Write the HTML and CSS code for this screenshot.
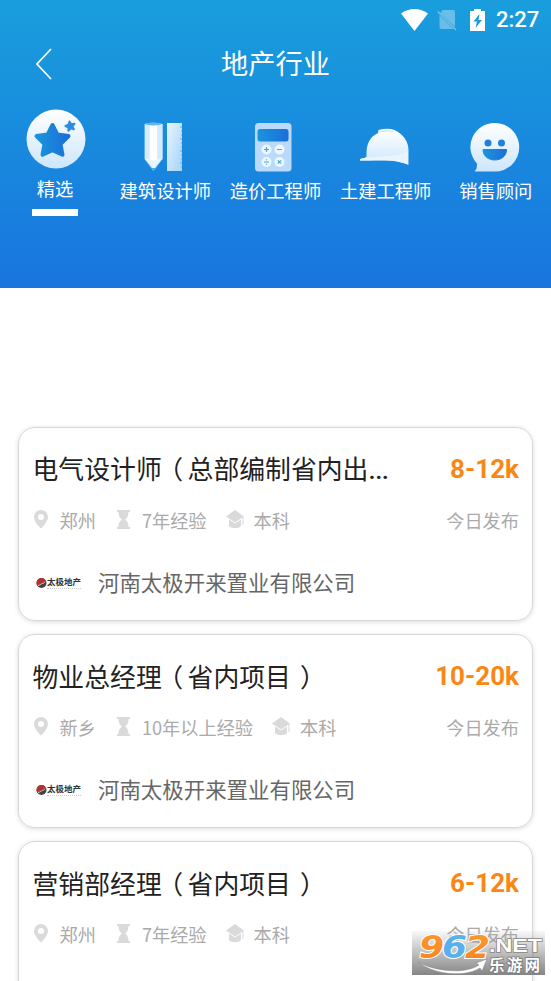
FILE: index.html
```html
<!DOCTYPE html>
<html lang="zh-CN">
<head>
<meta charset="utf-8">
<title>地产行业</title>
<link rel="stylesheet" href="styles.css">
</head>
<body>
<svg class="defs" width="0" height="0" aria-hidden="true">
  <defs>
    <linearGradient id="pale" x1="0" y1="0" x2="0" y2="1"><stop offset="0" stop-color="#fff"/><stop offset="1" stop-color="#cde6fc"/></linearGradient>
    <linearGradient id="blue" x1="0" y1="0" x2="1" y2="0"><stop offset="0" stop-color="#1a94dc"/><stop offset="1" stop-color="#1b6fd9"/></linearGradient>
    <linearGradient id="ruler" x1="0" y1="0" x2="1" y2="1"><stop offset="0" stop-color="#e8f5fe"/><stop offset="1" stop-color="#a5d3f7"/></linearGradient>
    <linearGradient id="orange" x1="0" y1="0" x2="0" y2="1"><stop offset="0" stop-color="#ff9a2e"/><stop offset="1" stop-color="#f58220"/></linearGradient>
  </defs>
  <symbol id="pin" viewBox="0 0 14 19"><path fill-rule="evenodd" d="M7 0a7 7 0 0 0-7 7c0 5 7 11.500 7 11.500S14 12 14 7a7 7 0 0 0-7-7Zm0 4a3 3 0 1 1 0 6 3 3 0 0 1 0-6Z"/></symbol>
  <symbol id="glass" viewBox="0 0 13 19"><path d="M0 0h13v2H0zM0 17h13v2H0zM1.500 1.500h10c0 5-1.500 6.500-3.500 8 2 1.500 3.500 3 3.500 8h-10c0-5 1.500-6.500 3.500-8-2-1.500-3.500-3-3.500-8Z"/></symbol>
  <symbol id="cap" viewBox="0 0 19 19"><path d="M9 0 18 6.500 9 12.500 0 6.500ZM3 9.500l6 4 6-4v6.500c-2 3-10 3-12 0ZM16.500 7h1v8h-1z"/></symbol>
  <symbol id="taiji" viewBox="0 0 11 12"><circle cx="5.500" cy="6" r="5" fill="#444"/><path fill="#c12c2c" d="M5.500 1a5 5 0 0 0-4.800 6.200C2 10 3.500 7 5.500 6.500S9 5 9 2.500A5 5 0 0 0 5.500 1Z"/><circle cx="4" cy="4" r="1" fill="#555"/><path d="M2 8.500c2 0 3-1.800 4.500-2s2-1 2.500-2" fill="none" stroke="#eee" stroke-width=".8"/></symbol>
</svg>

<header class="hero">
  <div class="status">
    <svg class="wifi" viewBox="0 0 27 22"><path d="M0 4.500C8-1.500 19-1.500 27 4.500L13.500 22Z"/></svg>
    <svg class="sim" viewBox="0 0 20 22"><path fill-opacity=".35" d="M5.500 1H16q2 0 2 2v15L3.500 4ZM2.500 6 16.500 20H4.500q-2 0-2-2Z"/><path d="M.8 2.500 19 21" stroke="#fff" stroke-opacity=".4" stroke-width="1.500"/></svg>
    <svg class="battery" viewBox="0 0 15 22"><path fill-rule="evenodd" d="M4 0h7v2h4v20H0V2h4ZM9.500 5 3.500 12.500H7L5.500 19l6.500-8H8.500Z"/></svg>
    <span class="clock">2:27</span>
  </div>
  <div class="navbar">
    <svg class="back" viewBox="0 0 16 32"><path d="M15 1 1 16l14 15" fill="none" stroke="#fff" stroke-width="1.700"/></svg>
    <h1>地产行业</h1>
  </div>
  <nav class="tabs">
    <a class="tab active">
      <svg class="star" viewBox="0 0 60 60"><circle cx="30" cy="30" r="29.500" fill="url(#pale)"/><path d="m26.500 16 4.800 9.500 11.200 1.600-8 8 2 10.700-10-4.500-10 4.500 2-10.700-8-8 11.200-1.600Z" fill="url(#blue)" stroke="url(#blue)" stroke-width="4" stroke-linejoin="round"/><path d="m43.500 12.500 1.700 2.700 3.200-.4-2 2.600 1.500 2.900-3.200-1-2.300 2.400v-3.300l-3-1.400 3.100-1.300Z" fill="#2b8ee3" stroke="#2b8ee3" stroke-width="2" stroke-linejoin="round"/></svg>
      <span>精选</span>
    </a>
    <a class="tab">
      <svg class="icon" viewBox="0 0 50 50"><path d="M5.500 2Q14-.5 23.500 2v35l-9 12-9-12Z" fill="#aed8f8"/><path d="M6 2h4.500v37L6 37ZM19 2h4.500v35L19 39Z" fill="#d4ebfc"/><path d="M10.500 2.500h8V39l-4 8-4-8Z" fill="#fff"/><path d="m6 37 4.500 0 4 2 4-2 4.500 0-8.500 10Z" fill="#e5f4fe"/><ellipse cx="14.500" cy="2" rx="8" ry="1.500" fill="#61b6ed"/><path d="m13 46 1.500 3 1.500-3Z" fill="#2ba5cf"/><path d="M28 1h15v48H28Z" fill="url(#ruler)"/><path d="M41 5h2m-1 4h1m-1 4h1m-2 4h2m-1 4h1m-1 4h1m-2 4h2m-1 4h1m-1 4h1m-2 4h2m-1 4h1" stroke="#59acea"/></svg>
      <span>建筑设计师</span>
    </a>
    <a class="tab">
      <svg class="icon" viewBox="0 0 50 50"><rect x="6" y="1" width="36.500" height="48.500" rx="3.500" fill="#b9dafa"/><rect x="8.500" y="7" width="31" height="12.500" rx="2.500" fill="url(#blue)"/><g fill="#edf7ff"><circle cx="17.500" cy="27.500" r="5"/><circle cx="30.500" cy="27.500" r="5"/><circle cx="17.500" cy="40" r="5"/><circle cx="30.500" cy="40" r="5"/></g><path d="M15 27.500h5M17.500 25v5M28 27.500h5M15 40h5M17.500 37.300v1M17.500 41.700v1m11.300-4.400 3.400 3.400m0-3.400-3.400 3.400" fill="none" stroke="#4aa5dc" stroke-width="1.200"/></svg>
      <span>造价工程师</span>
    </a>
    <a class="tab">
      <svg class="icon" viewBox="0 0 50 50"><path d="M0 38.500v-1.500q4-.5 6.500-2c-.5-13 3-20 11.500-24l.5-3q9-2.500 16 0c9 4 14 12 14 20v15c-7-4-18-5-27-4.500Z" fill="url(#pale)"/><path d="M6.500 35.500c14-1 30-1 41.500-6v13c-9-4-24-5-38-4H0V37Z" fill="#e9f5fe"/><path d="M19 10q7-2 14-.5" stroke="#c0e0f9" fill="none"/></svg>
      <span>土建工程师</span>
    </a>
    <a class="tab">
      <svg class="icon" viewBox="0 0 50 50"><path d="M25 1a24 24 0 1 1 0 48.500H4.500q3-3 2.500-8A24 24 0 0 1 25 1Z" fill="url(#pale)"/><circle cx="18" cy="21" r="3.500" fill="#247fd9"/><circle cx="31.500" cy="21" r="3.500" fill="#247fd9"/><path d="M13 27.500h23.500c0 14-23.500 14-23.500 0Z" fill="url(#blue)" stroke="url(#blue)" stroke-linejoin="round"/></svg>
      <span>销售顾问</span>
    </a>
  </nav>
</header>

<main class="jobs">
  <article class="card">
    <div class="row head"><h2>电气设计师<i>（</i>总部编制省内出<b class="dots">...</b></h2><strong>8-12k</strong></div>
    <div class="row meta">
      <svg class="pin"><use href="#pin"/></svg><span>郑州</span>
      <svg class="glass"><use href="#glass"/></svg><span>7年经验</span>
      <svg class="cap"><use href="#cap"/></svg><span>本科</span>
      <time>今日发布</time>
    </div>
    <div class="row company"><div class="logo"><svg><use href="#taiji"/></svg><div class="brand">太极地产</div></div><span>河南太极开来置业有限公司</span></div>
  </article>
  <article class="card">
    <div class="row head"><h2>物业总经理<i>（</i>省内项目<i class="close">）</i></h2><strong>10-20k</strong></div>
    <div class="row meta">
      <svg class="pin"><use href="#pin"/></svg><span>新乡</span>
      <svg class="glass"><use href="#glass"/></svg><span>10年以上经验</span>
      <svg class="cap"><use href="#cap"/></svg><span>本科</span>
      <time>今日发布</time>
    </div>
    <div class="row company"><div class="logo"><svg><use href="#taiji"/></svg><div class="brand">太极地产</div></div><span>河南太极开来置业有限公司</span></div>
  </article>
  <article class="card">
    <div class="row head"><h2>营销部经理<i>（</i>省内项目<i class="close">）</i></h2><strong>6-12k</strong></div>
    <div class="row meta">
      <svg class="pin"><use href="#pin"/></svg><span>郑州</span>
      <svg class="glass"><use href="#glass"/></svg><span>7年经验</span>
      <svg class="cap"><use href="#cap"/></svg><span>本科</span>
      <time>今日发布</time>
    </div>
  </article>
</main>

<aside class="watermark">
  <svg viewBox="0 0 133 44">
    <path d="M6 31c18 10 48 12 61 3l-3-2 11-4-5 12-2-3c-18 11-49 5-62-6Z" fill="#fff" stroke="#888" stroke-width=".6"/>
    <g class="digits"><text x="7" y="27" textLength="25" lengthAdjust="spacingAndGlyphs" fill="url(#orange)">9</text><text x="30" y="27" textLength="25" lengthAdjust="spacingAndGlyphs" fill="#5ab0ea">6</text><text x="53" y="27" textLength="25" lengthAdjust="spacingAndGlyphs" fill="url(#orange)">2</text></g>
    <text class="net" x="77" y="21" textLength="53" lengthAdjust="spacingAndGlyphs">.NET</text>
    <text class="site" x="77" y="39.500" textLength="51">乐游网</text>
  </svg>
</aside>
</body>
</html>
```

FILE: styles.css
```css
* { box-sizing: border-box; margin: 0; padding: 0; }
body {
  position: relative;
  width: 551px;
  height: 981px;
  overflow: hidden;
  background: #fff;
  font-family: "Noto Sans CJK SC", sans-serif;
}
svg { display: block; flex: none; }
.defs { position: absolute; }

.hero {
  height: 288px;
  background: linear-gradient(#199edc, #1875df);
  color: #fff;
}
.status {
  display: flex;
  align-items: center;
  justify-content: flex-end;
  height: 39px;
  padding-right: 13px;
  fill: #fff;
}
.wifi { width: 27px; height: 22px; }
.sim { width: 20px; height: 22px; margin-left: 9px; }
.battery { width: 15px; height: 22px; margin-left: 13px; }
.clock {
  width: 42px;
  margin-left: 11px;
  font: 500 22px/40px Roboto, sans-serif;
  white-space: nowrap;
}
.navbar {
  display: flex;
  align-items: center;
  height: 49px;
  padding: 0 36px;
}
.back { width: 16px; height: 32px; margin-top: 1px; }
.navbar h1 {
  flex: 1;
  margin: -3px 16px 0 0;
  text-align: center;
  font-size: 27.200px;
  font-weight: 400;
  line-height: 48px;
}
.tabs {
  display: grid;
  grid-template-columns: repeat(5, 110.200px);
  margin-top: 20px;
}
.tab {
  display: flex;
  flex-direction: column;
  align-items: center;
  padding-top: 14px;
  font-size: 18.300px;
  line-height: 26px;
  white-space: nowrap;
}
.icon { width: 50px; height: 50px; margin: 0 2px 5px 0; }
.active { padding-top: 1px; }
.star { width: 60px; height: 60px; margin: 0 0 6px 2px; }
.active::after {
  content: "";
  width: 46px;
  height: 7px;
  margin-top: 8px;
  background: #fff;
}

.jobs {
  display: flex;
  flex-direction: column;
  gap: 13px;
  height: 693px;
  padding: 138.500px 18px 0;
  overflow: hidden;
}
.card {
  flex: none;
  height: 194px;
  padding: 21px 13px 0 13.500px;
  border: 1.500px solid #d8d8d8;
  border-radius: 17px;
  box-shadow: 0 1px 5px rgba(0, 0, 0, .14);
}
.row { display: flex; align-items: center; white-space: nowrap; }
.head { height: 40px; justify-content: space-between; }
.head h2 { color: #222; font-size: 25.850px; font-weight: 400; line-height: 40px; }
.head i {
  display: inline-flex;
  justify-content: center;
  width: 25.800px;
  padding-right: 9px;
  font-style: normal;
}
.head .close { padding: 0 0 0 18px; }
.dots { font-family: Roboto, sans-serif; font-weight: 500; letter-spacing: -.5px; }
.head strong { color: #fa8714; font: 700 26px/40px Roboto, sans-serif; }
.meta { height: 26px; margin-top: 18px; color: #aaa; font-size: 18.200px; line-height: 26px; }
.meta svg { height: 19px; fill: #dadada; }
.meta .pin { width: 14px; margin-left: 1px; margin-right: 12px; }
.meta .glass { width: 13px; margin-left: 21px; margin-right: 12px; }
.meta .cap { width: 19px; margin-left: 19px; margin-right: 9px; }
.meta time { margin-left: auto; }
.company { height: 32px; margin-top: 33px; color: #666; font-size: 21.450px; line-height: 32px; }
.logo { display: flex; align-items: center; width: 46px; margin: 3px 16px 0 3.500px; }
.logo svg { width: 11px; height: 12px; }
.brand {
  padding-bottom: 2px;
  border-bottom: 1px dotted #ccc;
  color: #333;
  font-size: 8.500px;
  font-weight: 700;
  line-height: 9px;
}

.watermark {
  position: absolute;
  left: 412px;
  top: 931px;
  width: 133px;
  height: 44px;
  background: linear-gradient(rgba(210, 210, 210, .15), rgba(120, 120, 120, .9));
}
.watermark text { font-family: "Liberation Sans", sans-serif; font-weight: 700; }
.watermark .digits text { font-family: "DejaVu Sans", sans-serif; font-size: 32px; font-style: italic; stroke: #fff; stroke-width: 2px; paint-order: stroke; }
.watermark .net { fill: #fff; font-size: 19px; stroke: #888; stroke-width: 1.500px; paint-order: stroke; }
.watermark .site { fill: #fff; font-family: "Noto Sans CJK SC", sans-serif; font-size: 15.500px; stroke: #777; stroke-width: 1.500px; paint-order: stroke; }
```
